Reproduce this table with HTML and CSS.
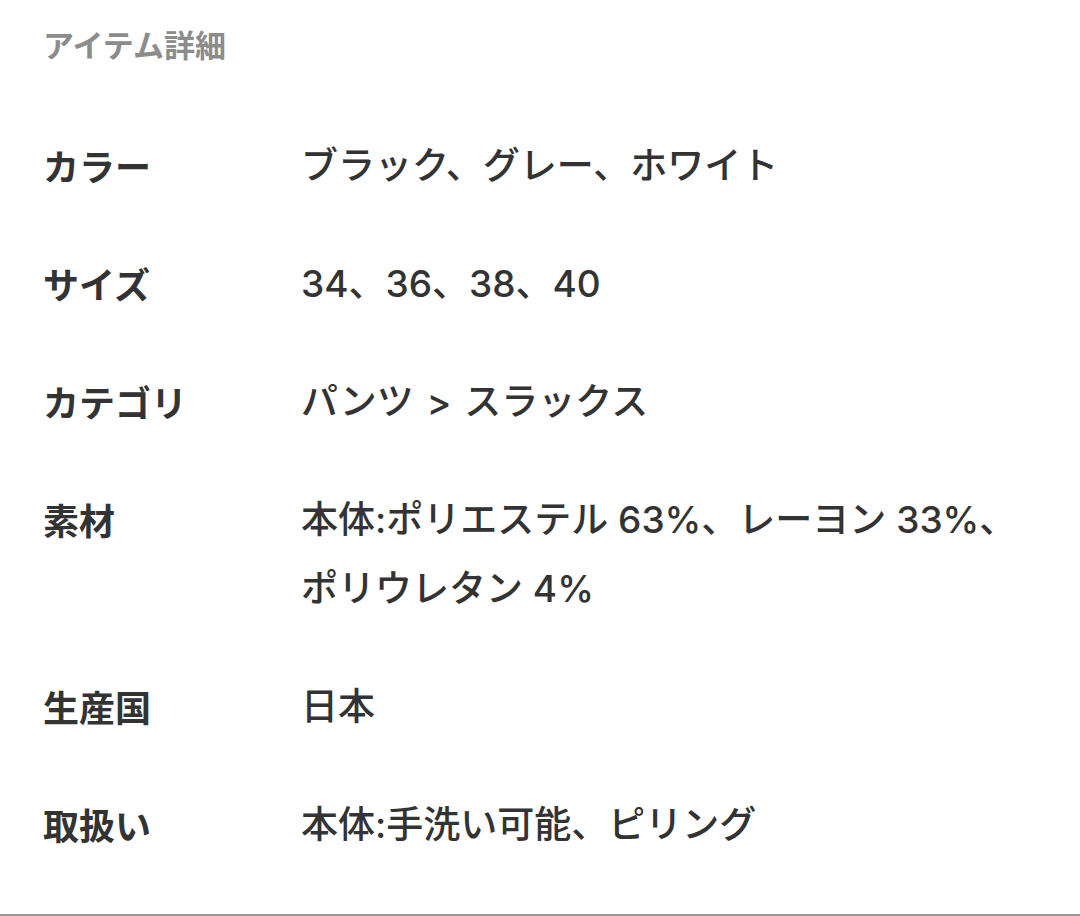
FILE: index.html
```html
<!DOCTYPE html>
<html lang="ja">
<head>
<meta charset="utf-8">
<title>アイテム詳細</title>
<link rel="stylesheet" href="styles.css">
</head>
<body>
<section class="details">
  <h2 class="details-title">アイテム詳細</h2>
  <dl class="spec">
    <dt class="spec-label">カラー</dt>
    <dd class="spec-value">ブラック、グレー、ホワイト</dd>
    <dt class="spec-label">サイズ</dt>
    <dd class="spec-value">34、36、38、40</dd>
    <dt class="spec-label">カテゴリ</dt>
    <dd class="spec-value spec-value-path">パンツ &gt; スラックス</dd>
    <dt class="spec-label">素材</dt>
    <dd class="spec-value">本体:ポリエステル 63%、レーヨン 33%、ポリウレタン 4%</dd>
    <dt class="spec-label">生産国</dt>
    <dd class="spec-value">日本</dd>
    <dt class="spec-label">取扱い</dt>
    <dd class="spec-value">本体:手洗い可能、ピリング</dd>
  </dl>
</section>
</body>
</html>
```
FILE: styles.css
```css
html, body {
  margin: 0;
  padding: 0;
  background: #ffffff;
}

body {
  font-family: "Noto Sans CJK JP", sans-serif;
  color: #333333;
}

.details {
  box-sizing: border-box;
  height: 916px;
  padding: 24px 43px 0 43px;
  border-bottom: 2px solid #9a9a9a;
}

.details-title {
  margin: 0;
  font-size: 31px;
  line-height: 40px;
  font-weight: 700;
  color: #8c8c8c;
}

.spec {
  margin: 67px 0 0 0;
  display: grid;
  grid-template-columns: 258px 1fr;
  row-gap: 49px;
  line-height: 69px;
}

.spec-label {
  font-size: 36px;
  font-weight: 700;
  color: #333333;
}

.spec-value {
  margin: 0;
  font-family: "Inter", "Noto Sans CJK JP", sans-serif;
  font-size: 37px;
  font-weight: 500;
  color: #333333;
}

.spec-value-path {
  word-spacing: 3px;
}
```
